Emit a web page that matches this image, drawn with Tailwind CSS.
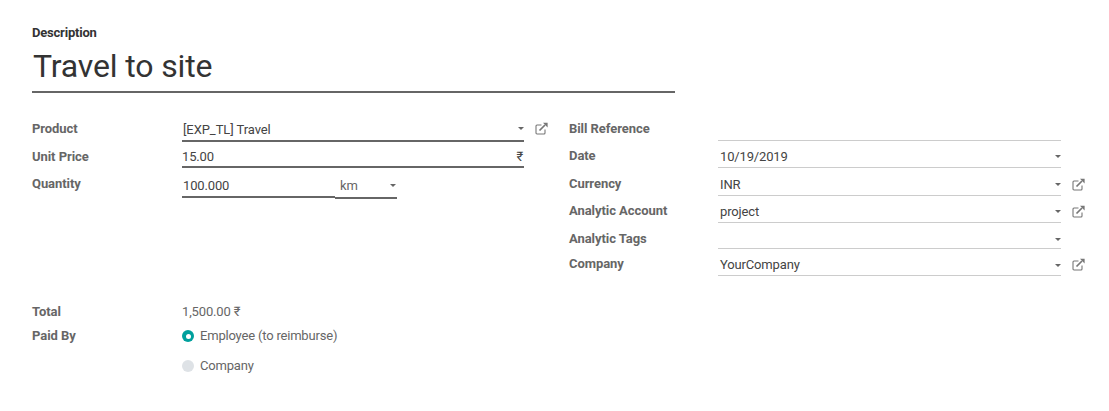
<!DOCTYPE html>
<html lang="en">
<head>
    <meta charset="UTF-8">
    <title>Expense</title>
    <script src="https://cdn.jsdelivr.net/npm/@tailwindcss/browser@4"></script>
</head>
<body class="bg-white font-['Roboto',sans-serif] text-[13px] leading-[18px] text-[#666666] tracking-[-0.15px]">
<svg class="hidden">
    <symbol id="ext" viewBox="0 0 13 13"><path d="M10 7.5V11a1 1 0 0 1-1 1H2a1 1 0 0 1-1-1V4a1 1 0 0 1 1-1h4.5" fill="none" stroke="#777" stroke-width="1.1"/><path d="M4.5 8.5 10 3" fill="none" stroke="#777" stroke-width="1.7"/><path d="M8 .8h4.6v4.6z" fill="#777"/></symbol>
</svg>
<div class="w-[1109px] h-[411px] overflow-hidden pl-8 pt-[24px]">
    <div class="font-bold text-[#333333] text-[13px] leading-[17px] tracking-[-0.2px]">Description</div>
    <div class="w-[643px] h-[52px] border-b-2 border-[#666666] text-[32px] leading-[50px] text-[#333333] pl-px tracking-[-0.15px]">Travel to site</div>

    <div class="flex mt-[22px]">
        <!-- left group -->
        <div class="w-[537px] shrink-0">
            <div class="flex h-[27px]">
                <div class="w-[150px] font-bold tracking-[-0.06px] pt-[5px]">Product</div>
                <div class="relative w-[342px] h-[27px] border-b-2 border-[#666666] pl-px pt-[6px] text-[#444444] tracking-[-0.08px]">[EXP_TL] Travel
                    <span class="absolute right-0 top-[12px] border-x-[3px] border-t-[3px] border-x-transparent border-t-[#666666]"></span>
                </div>
                <svg class="w-[13px] h-[13px] ml-[11px] mt-[7px]"><use href="#ext"/></svg>
            </div>
            <div class="flex h-[26px]">
                <div class="w-[150px] font-bold tracking-[-0.06px] pt-[6px]">Unit Price</div>
                <div class="flex justify-between w-[342px] h-[26px] border-b-2 border-[#666666] pt-[6px] text-[#444444]"><span>15.00</span><span class="pr-px">₹</span></div>
            </div>
            <div class="flex h-[30px]">
                <div class="w-[150px] font-bold tracking-[-0.06px] pt-[7px]">Quantity</div>
                <div class="w-[153px] h-[30px] border-b-2 border-[#666666] pl-px pt-[9px] text-[#444444]">100.000</div>
                <div class="relative w-[62px] h-[31px] border-b-2 border-[#666666] pl-[5px] pt-[9px]">km
                    <span class="absolute right-[1px] top-[16px] border-x-[3px] border-t-[3px] border-x-transparent border-t-[#666666]"></span>
                </div>
            </div>
        </div>

        <!-- right group -->
        <div class="w-[517px]">
            <div class="flex h-[26px]">
                <div class="w-[149px] font-bold tracking-[-0.06px] pt-[5px]">Bill Reference</div>
                <div class="w-[343px] border-b border-[#cccccc]"></div>
            </div>
            <div class="flex h-[27px]">
                <div class="w-[149px] font-bold tracking-[-0.06px] pt-[6px]">Date</div>
                <div class="relative w-[343px] border-b border-[#cccccc] pl-[2px] pt-[7px] text-[#444444]">10/19/2019
                    <span class="absolute right-0 top-[14px] border-x-[3px] border-t-[3px] border-x-transparent border-t-[#666666]"></span>
                </div>
            </div>
            <div class="flex h-[28px]">
                <div class="w-[149px] font-bold tracking-[-0.06px] pt-[7px]">Currency</div>
                <div class="relative w-[343px] border-b border-[#cccccc] pl-[2px] pt-[8px] text-[#444444]">INR
                    <span class="absolute right-0 top-[15px] border-x-[3px] border-t-[3px] border-x-transparent border-t-[#666666]"></span>
                </div>
                <svg class="w-[13px] h-[13px] ml-[11px] mt-[10px]"><use href="#ext"/></svg>
            </div>
            <div class="flex h-[27px]">
                <div class="w-[149px] font-bold tracking-[-0.06px] pt-[6px]">Analytic Account</div>
                <div class="relative w-[343px] border-b border-[#cccccc] pl-[2px] pt-[7px] text-[#444444]">project
                    <span class="absolute right-0 top-[14px] border-x-[3px] border-t-[3px] border-x-transparent border-t-[#666666]"></span>
                </div>
                <svg class="w-[13px] h-[13px] ml-[11px] mt-[9px]"><use href="#ext"/></svg>
            </div>
            <div class="flex h-[26px]">
                <div class="w-[149px] font-bold tracking-[-0.06px] pt-[7px]">Analytic Tags</div>
                <div class="relative w-[343px] border-b border-[#cccccc]">
                    <span class="absolute right-0 top-[15px] border-x-[3px] border-t-[3px] border-x-transparent border-t-[#666666]"></span>
                </div>
            </div>
            <div class="flex h-[27px]">
                <div class="w-[149px] font-bold tracking-[-0.06px] pt-[6px]">Company</div>
                <div class="relative w-[343px] border-b border-[#cccccc] pl-[2px] pt-[7px] text-[#444444]">YourCompany
                    <span class="absolute right-0 top-[15px] border-x-[3px] border-t-[3px] border-x-transparent border-t-[#666666]"></span>
                </div>
                <svg class="w-[13px] h-[13px] ml-[11px] mt-[9px]"><use href="#ext"/></svg>
            </div>
        </div>
    </div>

    <div class="flex h-[24px] mt-[27px]">
        <div class="w-[150px] font-bold tracking-[-0.06px]">Total</div>
        <div>1,500.00 ₹</div>
    </div>
    <div class="flex">
        <div class="w-[150px] font-bold tracking-[-0.06px]">Paid By</div>
        <div class="flex flex-col gap-[12px] tracking-[-0.19px]">
            <div class="flex items-center gap-[6px]">
                <span class="w-3 h-3 rounded-full bg-[#00a09d] flex items-center justify-center"><span class="w-[5px] h-[5px] rounded-full bg-white"></span></span>
                Employee (to reimburse)
            </div>
            <div class="flex items-center gap-[6px]">
                <span class="w-3 h-3 rounded-full bg-[#dee2e6]"></span>
                Company
            </div>
        </div>
    </div>
</div>
</body>
</html>
